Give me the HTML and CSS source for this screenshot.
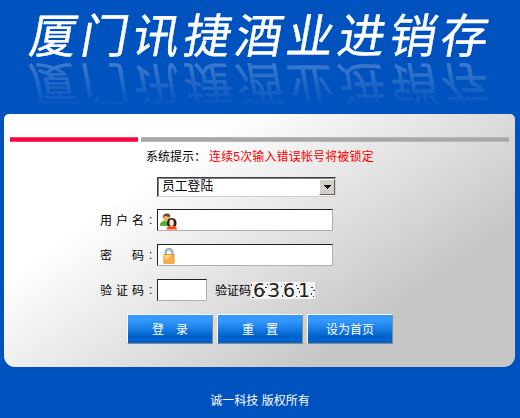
FILE: index.html
```
<!DOCTYPE html>
<html lang="zh-CN">
<head>
    <meta charset="UTF-8">
    <title>厦门讯捷酒业进销存</title>
    <link rel="stylesheet" href="styles.css">
</head>
<body>
    <h1 class="title"><span class="title-text">厦门讯捷酒业进销存</span></h1>

    <form class="panel">
        <div class="bars">
            <div class="bar-red"></div>
            <div class="bar-gray"></div>
        </div>
        <p class="tip">系统提示：<span class="warn">连续5次输入错误帐号将被锁定</span></p>

        <div class="select">
            <span class="select-text">员工登陆</span>
            <span class="select-btn">
                <svg width="7" height="4" viewBox="0 0 7 4" shape-rendering="crispEdges"><path d="M0 0h7L3.5 4z" fill="#000"/></svg>
            </span>
        </div>

        <div class="row">
            <label class="label"><span>用</span><span>户</span><span>名</span></label><span class="colon">:</span>
            <div class="input">
                <svg width="18" height="17" viewBox="0 0 18 17">
                    <path d="M0.3 12.5c0-3 2.3-4.2 5-4.2 3 0 5 1.2 5 4.2z" fill="#45bd18" stroke="#2f9b12" stroke-width=".6"/>
                    <circle cx="6.500" cy="5" r="3.600" fill="#efb568"/>
                    <path d="M2.800 4.500C2.700 1.500 5 .4 7 .5c2.300.1 3.600 1.500 3.400 3.300C8 4 6.500 3.300 5.500 2.800 4.600 3.500 3.600 4 2.800 4.500z" fill="#5c4a35"/>
                    <path d="M7.500 13c-1.200-4.500.2-8 4.300-8 4.300 0 5.500 3.800 4.200 8z" fill="#2b2226"/>
                    <ellipse cx="11.600" cy="9.800" rx="2.200" ry="3.300" fill="#ffe9d6"/>
                    <path d="M6.500 16.500c0-2.800 2-4 5.200-4s5.300 1.200 5.300 4z" fill="#fb4a16"/>
                    <path d="M10.200 12.500h3l-1.500 1.700z" fill="#ffe0c4"/>
                </svg>
            </div>
        </div>
        <div class="row">
            <label class="label"><span>密</span><span>码</span></label><span class="colon">:</span>
            <div class="input input-lock">
                <svg width="12" height="16" viewBox="0 0 12 16">
                    <path d="M2.800 7V4a3.200 3 0 0 1 6.400 0v3" fill="none" stroke="#7b9da8" stroke-width="2.400"/>
                    <path d="M2.800 7V4a3.200 3 0 0 1 6.400 0v3" fill="none" stroke="#b9d3dc" stroke-width="1"/>
                    <rect x=".9" y="6.400" width="10.200" height="8.900" fill="#f7b04a" stroke="#e29432" stroke-width=".8"/>
                    <path d="M1.500 7h7l-5 4.500h-2z" fill="#ffd48a"/>
                </svg>
            </div>
        </div>
        <div class="row">
            <label class="label"><span>验</span><span>证</span><span>码</span></label><span class="colon">:</span>
            <div class="input input-short"></div>
            <span class="code-label">验证码</span>
            <span class="captcha">
                <span>6</span><span>3</span><span>6</span><span>1</span>
                <svg class="noise" width="64" height="17" viewBox="0 0 64 17">
                    <path fill="#333" d="M0 2h1v2h-1zM14 5h2v1h-2zM16 2h1v1h-1zM12 9h2v2h-2zM20 8h1v1h-1zM17 13h2v1h-2zM31 13h1v2h-1zM30 4h1v1h-1zM33 2h1v1h-1zM45 3h1v1h-1zM46 6h2v1h-2zM48 9h1v2h-1zM45 14h1v1h-1zM60 5h2v1h-2zM62 8h2v1h-2zM60 11h1v2h-1zM62 14h1v1h-1zM1 15h2v1h-2z"/>
                </svg>
            </span>
        </div>

        <div class="buttons">
            <button type="button" class="btn">登　录</button>
            <button type="button" class="btn">重　置</button>
            <button type="button" class="btn">设为首页</button>
        </div>
    </form>

    <p class="footer">诚一科技 版权所有</p>
</body>
</html>
```

FILE: styles.css
```
* {
    box-sizing: border-box;
}
body {
    margin: 0;
    width: 520px;
    height: 418px;
    overflow: hidden;
    background: #0052bf;
    font-family: "Liberation Sans", "Noto Sans CJK SC", sans-serif;
    font-size: 12px;
    color: #000;
}
.title {
    margin: 0;
    padding: 7px 0 0 31px;
    height: 60px;
    font-family: "Noto Sans CJK SC", sans-serif;
    font-size: 47px;
    font-weight: 400;
    line-height: 51px;
    letter-spacing: 4.4px;
    white-space: nowrap;
    color: #fff;
    -webkit-text-stroke: 0.4px #fff;
    -webkit-box-reflect: below 0 linear-gradient(transparent 20%, rgba(255, 255, 255, 0.25));
}
.title-text {
    display: block;
    transform: skewX(-10deg);
}
.panel {
    width: 511px;
    height: 253px;
    margin: 54px 0 0 4px;
    padding: 23px 6px 0;
    border-radius: 5px 5px 11px 11px;
    background: linear-gradient(145deg, #fff 27%, #c6c6c6 77%);
}
.bars {
    display: flex;
    gap: 3px;
    height: 5px;
}
.bar-red {
    width: 128px;
    background: #ff0040;
    border: solid #ff3d6c;
    border-width: 1px 0;
}
.bar-gray {
    flex: 1;
    background: #a8a8a8;
    border: solid #b8b8b8;
    border-width: 1px 0;
}
.tip {
    margin: 6px 0 0 136px;
    line-height: 18px;
    white-space: nowrap;
}
.warn {
    margin-left: 3px;
    color: #f00;
    letter-spacing: 0.15px;
}
.select {
    display: flex;
    width: 179px;
    height: 20px;
    margin: 11px 0 12px 147px;
    background: #fff;
    border: 1px solid;
    border-color: #404040 #d4d0c8 #d4d0c8 #404040;
    box-shadow: inset 1px 1px #808080;
}
.select-text {
    flex: 1;
    padding-left: 4px;
    font-size: 12.8px;
    line-height: 16px;
}
.select-btn {
    display: flex;
    align-items: center;
    justify-content: center;
    width: 16px;
    height: 16px;
    margin-top: 1px;
    background: #d4d0c8;
    border: 1px solid;
    border-color: #fff #606060 #606060 #fff;
}
.row {
    display: flex;
    align-items: center;
    height: 22px;
    margin: 0 0 13px 90px;
}
.label {
    display: flex;
    justify-content: space-between;
    width: 44px;
    padding-bottom: 2px;
}
.colon {
    width: 13px;
    padding-left: 5px;
}
.input {
    width: 176px;
    height: 22px;
    padding: 3px 0 0 2px;
    background: #fff;
    border: 1px solid;
    border-color: #222 #b5adad #b5adad #222;
}
.input svg {
    display: block;
}
.input-lock {
    padding-left: 5px;
}
.input-short {
    width: 50px;
}
.code-label {
    margin-left: 8px;
    padding-bottom: 2px;
}
.captcha {
    position: relative;
    display: flex;
    justify-content: space-between;
    width: 64px;
    height: 17px;
    padding: 0 5px 0 2px;
    background: #f4f4f4;
    color: #222;
    font-family: "DejaVu Sans", sans-serif;
    font-size: 19px;
    line-height: 17px;
}
.noise {
    position: absolute;
    top: 0;
    left: 0;
}
.buttons {
    display: flex;
    gap: 4px;
    margin: 1px 0 0 117px;
}
.btn {
    width: 86px;
    height: 30px;
    padding: 0 0 2px;
    border: 1px solid;
    border-color: #fff #8a8a8a #8a8a8a #fff;
    background: linear-gradient(#3399ff 20%, #0063cc 75%);
    color: #fff;
    font-family: inherit;
    font-size: 12px;
}
.footer {
    margin: 25px 0 0;
    line-height: 18px;
    text-align: center;
    color: #fff;
}
```
